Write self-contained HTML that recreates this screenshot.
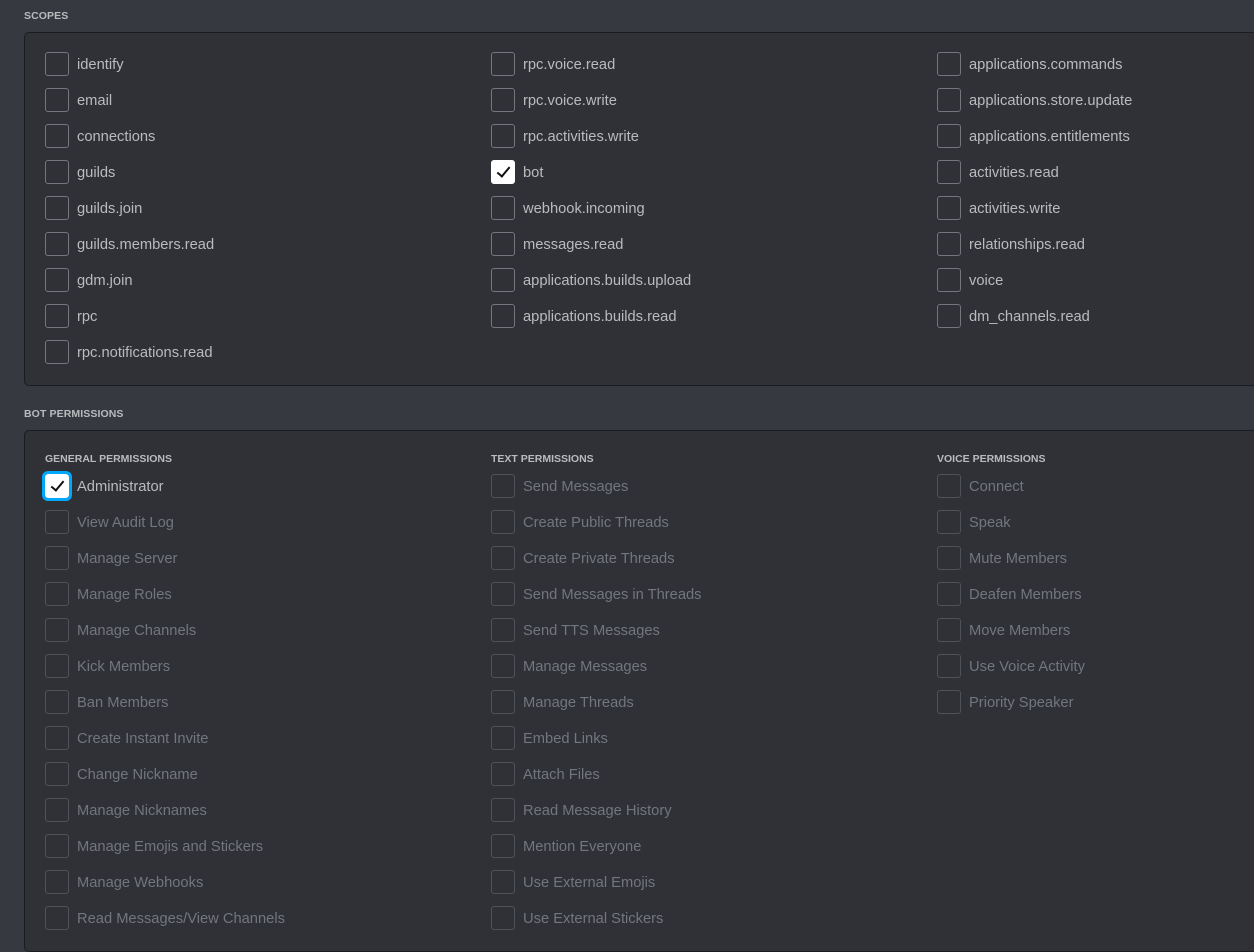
<!DOCTYPE html>
<html><head><meta charset="utf-8"><style>
html,body{margin:0;padding:0;background:#36393f;width:1254px;height:924px;overflow:hidden;font-family:"Liberation Sans",sans-serif;}
.lbl{position:absolute;left:24px;font-size:10.5px;font-weight:bold;color:#b9bbbe;letter-spacing:0.1px}
.box{position:absolute;left:24px;width:1260px;background:#2f3136;border:1px solid #1b1c1f;border-radius:5px}
.col{position:absolute;width:440px}
.row{height:36px;position:relative}
.cb{position:absolute;left:0;top:0;width:22px;height:22px;border:1px solid #72767d;border-radius:3px;box-sizing:content-box}
.t{position:absolute;left:32px;top:5px;font-size:14.7px;color:#b9bbbe;white-space:nowrap}
.dis .cb{border-color:#4f5257}
.dis .t{color:#72767d}
.on{background:#fff;border-color:#fff}
.on::after{content:"";position:absolute;left:8px;top:3px;width:5px;height:11px;border:solid #111;border-width:0 2px 2px 0;transform:rotate(40deg)}
.h{font-size:10.5px;font-weight:bold;color:#b9bbbe;height:22px;position:relative;top:1px}
.adm{outline:3px solid #00a8fc;}
</style></head><body>
<div class="lbl" style="top:10px">SCOPES</div>
<div class="box" style="top:32px;height:352px"></div>
<div class="col" style="left:45px;top:52px">
<div class="row"><div class="cb"></div><div class="t">identify</div></div>
<div class="row"><div class="cb"></div><div class="t">email</div></div>
<div class="row"><div class="cb"></div><div class="t">connections</div></div>
<div class="row"><div class="cb"></div><div class="t">guilds</div></div>
<div class="row"><div class="cb"></div><div class="t">guilds.join</div></div>
<div class="row"><div class="cb"></div><div class="t">guilds.members.read</div></div>
<div class="row"><div class="cb"></div><div class="t">gdm.join</div></div>
<div class="row"><div class="cb"></div><div class="t">rpc</div></div>
<div class="row"><div class="cb"></div><div class="t">rpc.notifications.read</div></div>
</div>
<div class="col" style="left:491px;top:52px">
<div class="row"><div class="cb"></div><div class="t">rpc.voice.read</div></div>
<div class="row"><div class="cb"></div><div class="t">rpc.voice.write</div></div>
<div class="row"><div class="cb"></div><div class="t">rpc.activities.write</div></div>
<div class="row"><div class="cb on"></div><div class="t">bot</div></div>
<div class="row"><div class="cb"></div><div class="t">webhook.incoming</div></div>
<div class="row"><div class="cb"></div><div class="t">messages.read</div></div>
<div class="row"><div class="cb"></div><div class="t">applications.builds.upload</div></div>
<div class="row"><div class="cb"></div><div class="t">applications.builds.read</div></div>
</div>
<div class="col" style="left:937px;top:52px">
<div class="row"><div class="cb"></div><div class="t">applications.commands</div></div>
<div class="row"><div class="cb"></div><div class="t">applications.store.update</div></div>
<div class="row"><div class="cb"></div><div class="t">applications.entitlements</div></div>
<div class="row"><div class="cb"></div><div class="t">activities.read</div></div>
<div class="row"><div class="cb"></div><div class="t">activities.write</div></div>
<div class="row"><div class="cb"></div><div class="t">relationships.read</div></div>
<div class="row"><div class="cb"></div><div class="t">voice</div></div>
<div class="row"><div class="cb"></div><div class="t">dm_channels.read</div></div>
</div>

<div class="lbl" style="top:408px">BOT PERMISSIONS</div>
<div class="box" style="top:430px;height:520px"></div>
<div class="col" style="left:45px;top:452px">
<div class="h">GENERAL PERMISSIONS</div>
<div class="row"><div class="cb on adm"></div><div class="t">Administrator</div></div>
<div class="dis">
<div class="row"><div class="cb"></div><div class="t">View Audit Log</div></div>
<div class="row"><div class="cb"></div><div class="t">Manage Server</div></div>
<div class="row"><div class="cb"></div><div class="t">Manage Roles</div></div>
<div class="row"><div class="cb"></div><div class="t">Manage Channels</div></div>
<div class="row"><div class="cb"></div><div class="t">Kick Members</div></div>
<div class="row"><div class="cb"></div><div class="t">Ban Members</div></div>
<div class="row"><div class="cb"></div><div class="t">Create Instant Invite</div></div>
<div class="row"><div class="cb"></div><div class="t">Change Nickname</div></div>
<div class="row"><div class="cb"></div><div class="t">Manage Nicknames</div></div>
<div class="row"><div class="cb"></div><div class="t">Manage Emojis and Stickers</div></div>
<div class="row"><div class="cb"></div><div class="t">Manage Webhooks</div></div>
<div class="row"><div class="cb"></div><div class="t">Read Messages/View Channels</div></div>
</div></div>
<div class="col dis" style="left:491px;top:452px">
<div class="h">TEXT PERMISSIONS</div>
<div class="row"><div class="cb"></div><div class="t">Send Messages</div></div>
<div class="row"><div class="cb"></div><div class="t">Create Public Threads</div></div>
<div class="row"><div class="cb"></div><div class="t">Create Private Threads</div></div>
<div class="row"><div class="cb"></div><div class="t">Send Messages in Threads</div></div>
<div class="row"><div class="cb"></div><div class="t">Send TTS Messages</div></div>
<div class="row"><div class="cb"></div><div class="t">Manage Messages</div></div>
<div class="row"><div class="cb"></div><div class="t">Manage Threads</div></div>
<div class="row"><div class="cb"></div><div class="t">Embed Links</div></div>
<div class="row"><div class="cb"></div><div class="t">Attach Files</div></div>
<div class="row"><div class="cb"></div><div class="t">Read Message History</div></div>
<div class="row"><div class="cb"></div><div class="t">Mention Everyone</div></div>
<div class="row"><div class="cb"></div><div class="t">Use External Emojis</div></div>
<div class="row"><div class="cb"></div><div class="t">Use External Stickers</div></div>
</div>
<div class="col dis" style="left:937px;top:452px">
<div class="h">VOICE PERMISSIONS</div>
<div class="row"><div class="cb"></div><div class="t">Connect</div></div>
<div class="row"><div class="cb"></div><div class="t">Speak</div></div>
<div class="row"><div class="cb"></div><div class="t">Mute Members</div></div>
<div class="row"><div class="cb"></div><div class="t">Deafen Members</div></div>
<div class="row"><div class="cb"></div><div class="t">Move Members</div></div>
<div class="row"><div class="cb"></div><div class="t">Use Voice Activity</div></div>
<div class="row"><div class="cb"></div><div class="t">Priority Speaker</div></div>
</div>
</body></html>
